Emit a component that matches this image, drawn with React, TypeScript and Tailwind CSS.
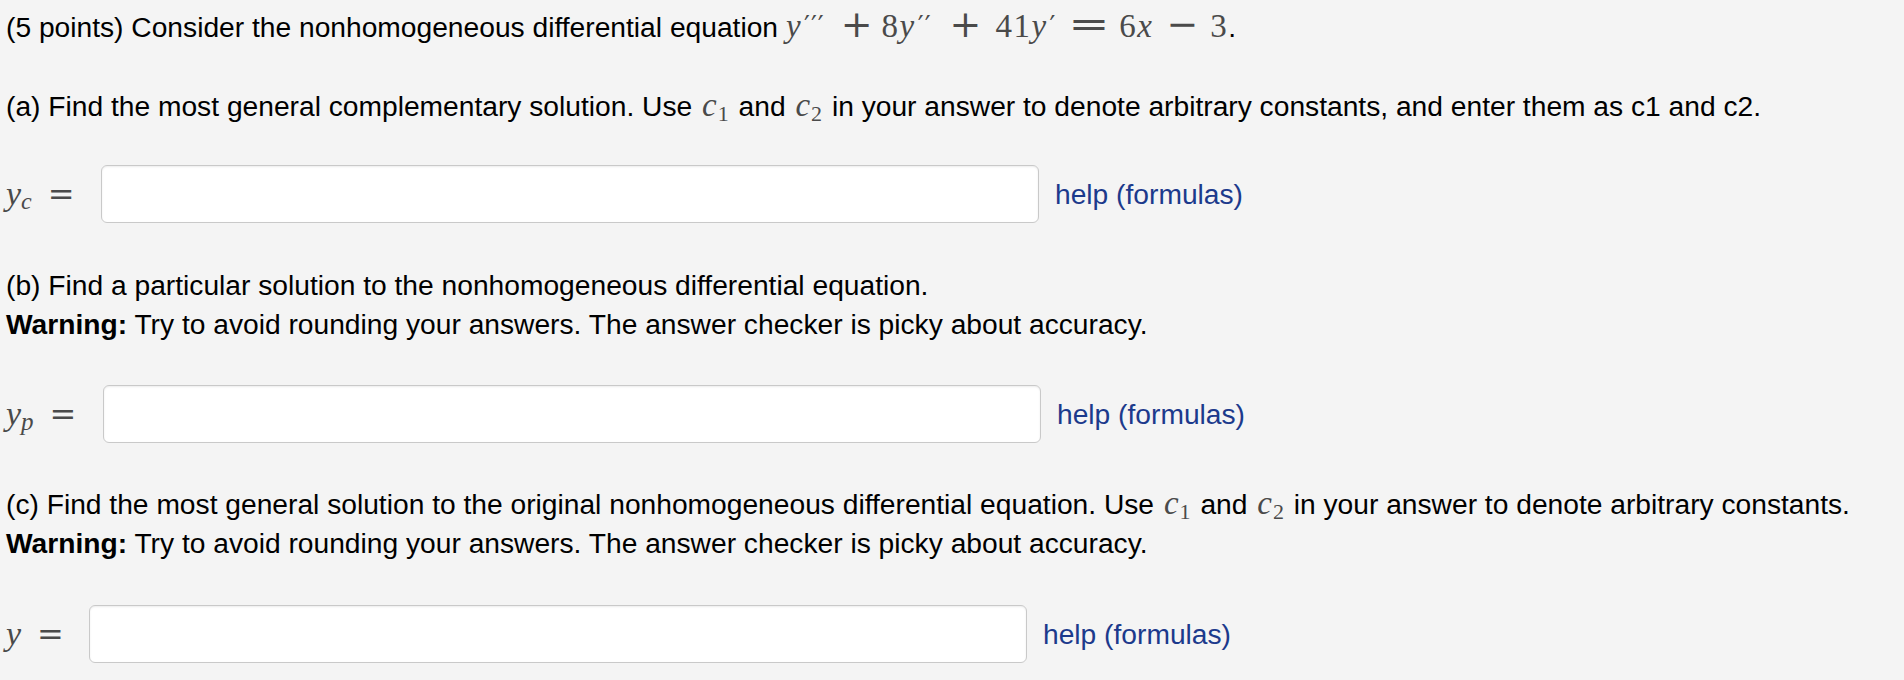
import React from "react";

function MI({ children }: { children: React.ReactNode }) {
    return <span className="italic">{children}</span>;
}

function Math({ children, className = "" }: { children: React.ReactNode; className?: string }) {
    return <span className={"font-['Liberation_Serif','Times_New_Roman',serif] leading-[30px] text-[#4a4a4a] whitespace-nowrap " + className}>{children}</span>;
}

// relation / binary operators are wider in the TeX fonts than in Times
function Op({ children, className = "" }: { children: React.ReactNode; className?: string }) {
    return <span className={"font-['DejaVu_Serif',serif] tracking-normal " + className}>{children}</span>;
}

function Primes({ n }: { n: number }) {
    return <span className="relative -top-[3px] ml-[2px] font-['DejaVu_Serif',serif] text-[26px] tracking-[1px]">{"′".repeat(n)}</span>;
}

function Const({ n }: { n: string }) {
    return <Math className="mx-[2px] text-[33px]">
        <MI>c</MI><span className="relative top-[5px] ml-[1px] text-[22px]">{n}</span>
    </Math>
}

function AnswerRow({ label, labelClass, className = "" }: { label: React.ReactNode; labelClass: string; className?: string }) {
    return <div className={"flex h-[58px] items-center " + className}>
        <Math className={"flex shrink-0 items-center text-[34px] " + labelClass}>
            {label}
            <Op className="ml-[16px] text-[32px]">=</Op>
        </Math>
        <input type="text" className="h-[58px] w-[938px] rounded-[6px] border border-[#c9c9c9] bg-white shadow-[inset_0_1px_2px_rgba(0,0,0,0.08)] outline-none" />
        <a href="#" className="ml-[16px] text-[#1c3a8c]">help (formulas)</a>
    </div>
}

export default function App() {
    return <div className="min-h-[680px] w-full bg-[#f4f4f4] pl-[6px] pt-[8px] font-['Liberation_Sans',Arial,sans-serif] text-[28.2px] leading-[38.5px] text-black">
        <p>
            (5 points) Consider the nonhomogeneous differential equation{" "}
            <Math className="text-[33px] tracking-[1.5px]">
                <MI>y</MI><Primes n={3} />
                <Op className="ml-[16px] mr-[9px] text-[38px]">+</Op>8<MI>y</MI><Primes n={2} />
                <Op className="ml-[18px] mr-[14px] text-[38px]">+</Op>41<MI>y</MI><Primes n={1} />
                <Op className="ml-[17px] mr-[14px] inline-block scale-x-[1.3] text-[38px]">=</Op>6<MI>x</MI>
                <Op className="ml-[13px] mr-[12px] text-[38px]">−</Op>3
            </Math>.
        </p>
        <p className="mt-[40px]">
            (a) Find the most general complementary solution. Use <Const n="1" /> and <Const n="2" /> in your answer to denote arbitrary constants, and enter them as c1 and c2.
        </p>
        <AnswerRow
            className="mt-[40px]"
            labelClass="w-[95px]"
            label={<><MI>y</MI><span className="relative top-[7px] text-[24px] italic">c</span></>}
        />
        <p className="mt-[43px]">(b) Find a particular solution to the nonhomogeneous differential equation.</p>
        <p><b>Warning:</b> Try to avoid rounding your answers. The answer checker is picky about accuracy.</p>
        <AnswerRow
            className="mt-[42px]"
            labelClass="w-[97px]"
            label={<><MI>y</MI><span className="relative top-[8px] text-[25px] italic">p</span></>}
        />
        <p className="mt-[42px]">
            (c) Find the most general solution to the original nonhomogeneous differential equation. Use <Const n="1" /> and <Const n="2" /> in your answer to denote arbitrary constants.
        </p>
        <p><b>Warning:</b> Try to avoid rounding your answers. The answer checker is picky about accuracy.</p>
        <AnswerRow
            className="mt-[43px]"
            labelClass="w-[83px]"
            label={<MI>y</MI>}
        />
    </div>
}
